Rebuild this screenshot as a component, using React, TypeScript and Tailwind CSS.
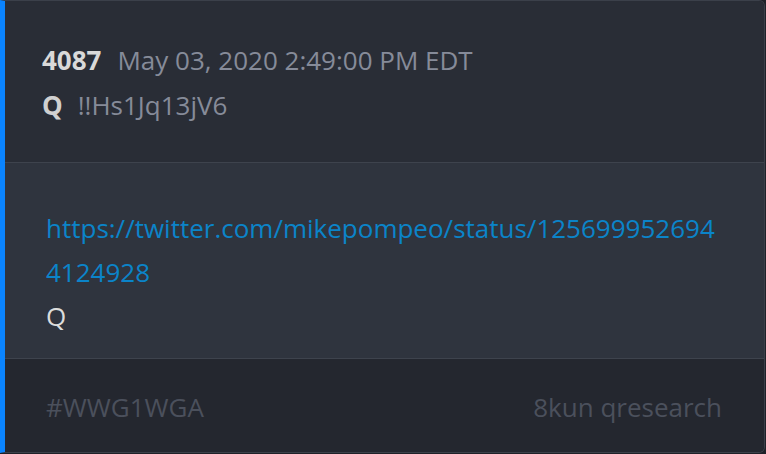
import React from 'react';

const App: React.FC = () => {
  return (
    <div className="w-[766px] h-[454px] bg-[#1f2229] font-['Open_Sans',sans-serif] text-[26px]">
      <div className="w-[765px] h-[453px] flex flex-col rounded-r-md overflow-hidden border border-[#3b404a] border-l-[5px] border-l-[#0a84ff]">
        {/* header */}
        <div className="h-[161px] bg-[#292d36] pl-[37px] pt-[37px] leading-[45px]">
          <div className="flex items-baseline gap-[16px]">
            <span className="font-bold text-[#d9d9d9]">4087</span>
            <span className="text-[#868b99]">May 03, 2020 2:49:00 PM EDT</span>
          </div>
          <div className="flex items-baseline gap-[15px]">
            <span className="font-bold text-[#d0d0d0]">Q</span>
            <span className="text-[#868b99]">!!Hs1Jq13jV6</span>
          </div>
        </div>
        {/* body */}
        <div className="h-[196px] bg-[#2f343e] border-t border-[#3e434d] pl-[41px] pr-[42px] pt-[43px] leading-[44px]">
          <a className="text-[#0b84c9] break-all" href="#">
            https://twitter.com/mikepompeo/status/1256999526944124928
          </a>
          <div className="text-[#dcdcdc]">Q</div>
        </div>
        {/* footer */}
        <div className="flex-1 bg-[#24272f] border-t border-[#3e434d] pl-[41px] pr-[42px] pt-[4px] flex items-center justify-between text-[#4b505c]">
          <span>#WWG1WGA</span>
          <span>8kun qresearch</span>
        </div>
      </div>
    </div>
  );
};

export default App;
